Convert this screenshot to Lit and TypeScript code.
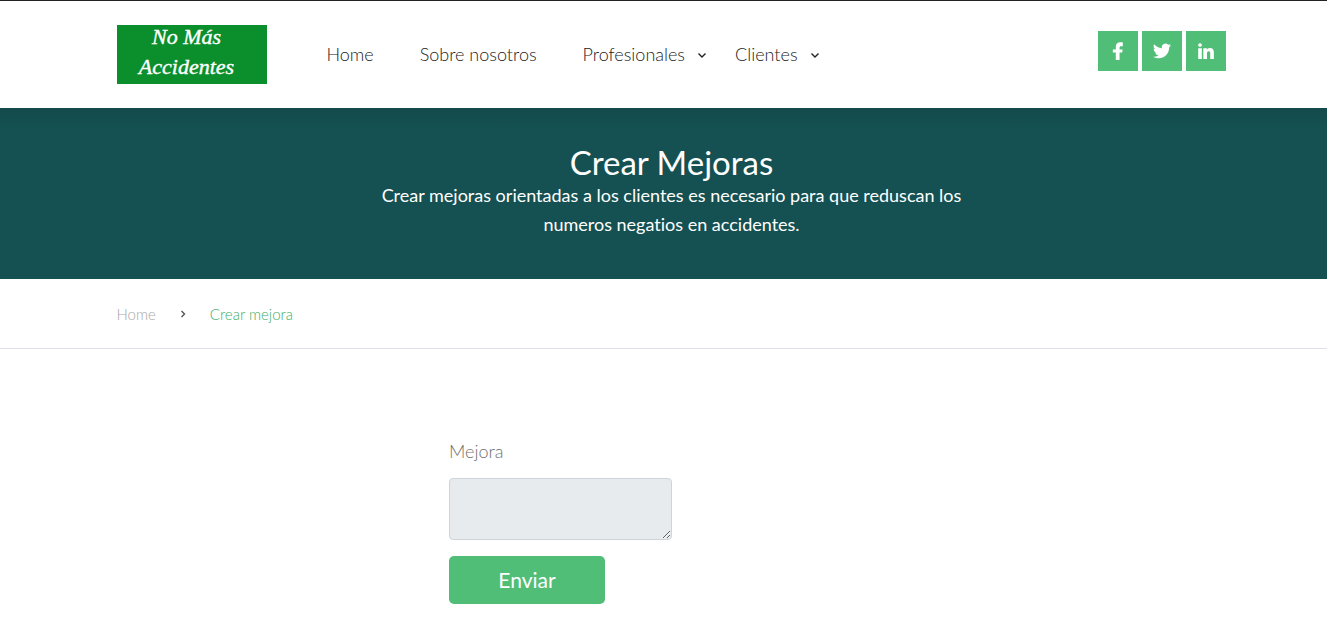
import { LitElement, html, css, svg } from "lit";
import { customElement } from "lit/decorators.js";

const chevronDown = html`<svg class="chevron" viewBox="0 0 10 10" aria-hidden="true"><path d="M1.5 3.5 5 7 8.5 3.5" /></svg>`;
const chevronRight = html`<svg class="chevron crumb-sep" viewBox="0 0 10 10" aria-hidden="true"><path d="M3.5 2 6.5 5 3.5 8" /></svg>`;

const socials = [
  {
    name: "Facebook",
    box: "0 0 320 512",
    shape: svg`<path d="M279 300l14-88h-89v-46c0-25 12-42 52-42h41V14s-37-7-72-7c-83 0-128 44-128 125v80H13v88h84v212h107V300z" />`,
  },
  {
    name: "Twitter",
    box: "0 0 24 24",
    shape: svg`<path d="M23.95 4.57a10 10 0 0 1-2.82.77 4.96 4.96 0 0 0 2.16-2.72c-.95.55-2 .95-3.13 1.18a4.92 4.92 0 0 0-8.38 4.48C7.69 8.1 4.07 6.13 1.64 3.16a4.9 4.9 0 0 0 1.52 6.57 4.9 4.9 0 0 1-2.23-.61v.06a4.92 4.92 0 0 0 3.95 4.83 5 5 0 0 1-2.21.08 4.94 4.94 0 0 0 4.6 3.42A9.87 9.87 0 0 1 0 19.54a13.99 13.99 0 0 0 7.55 2.21c9.05 0 14-7.5 14-13.98 0-.21 0-.42-.02-.63a9.94 9.94 0 0 0 2.46-2.55z" />`,
  },
  {
    name: "LinkedIn",
    box: "0 0 448 512",
    shape: svg`<path d="M105 480H2V176h103zM54 140C24 140 0 115 0 86a54 54 0 0 1 108 0c0 29-24 54-54 54zm394 340H345V334c0-34-1-74-43-74-44 0-51 38-51 72v148H148V176h99v41h1c13-24 43-48 88-48 94 0 112 62 112 142z" />`,
  },
];

@customElement("app-root")
export class AppRoot extends LitElement {
  static styles = css`
    :host {
      display: block;
      min-height: 100vh;
      background: #fff;
      color: #707070;
      font: 300 18px/29px Lato, "Open Sans", sans-serif;
      font-variant-ligatures: none;
    }
    *, *::before, *::after { box-sizing: border-box; }
    a { color: inherit; text-decoration: none; }
    .page { padding-left: 16px; }
    .container { max-width: 1110px; margin: 0 auto; }
    header {
      border-top: 1px solid #222;
      background: #fff;
    }
    .bar {
      display: flex;
      align-items: center;
      padding: 24px 1px 24px 0;
    }
    .logo {
      display: flex;
      flex-direction: column;
      align-items: center;
      gap: 6px;
      width: 150px;
      height: 59px;
      padding-right: 10px;
      background: #0a8f2c;
      color: #fff;
      font: italic 400 22px/24px "Liberation Serif", serif;
      -webkit-text-stroke: 0.4px #fff;
    }
    nav { display: flex; gap: 46px; margin-left: 60px; color: #222; }
    nav a { display: flex; align-items: center; gap: 12px; }
    .menus { display: flex; gap: 28px; }
    .chevron { width: 10px; height: 10px; fill: none; stroke: #222; stroke-width: 1.4; }
    .social { display: flex; gap: 4px; margin: 0 0 7px auto; }
    .social a {
      width: 40px;
      height: 40px;
      display: grid;
      place-items: center;
      background: #51be78;
    }
    .social svg { height: 18px; width: 18px; fill: #fff; }
    .hero {
      background: linear-gradient(#144a4b, #155152 20px);
      color: #fff;
      text-align: center;
      padding-top: 36px;
      padding-bottom: 40px;
      font-weight: 400;
    }
    h1 { font-size: 33px; line-height: 37px; font-weight: 400; margin: 0; }
    .hero p { margin: 0 auto; max-width: 620px; }
    .crumbs { border-bottom: 1px solid #dee2e6; font-size: 15px; line-height: 24px; }
    .crumbs .container { display: flex; align-items: center; padding: 23px 0 22px; }
    .crumbs a { color: #a8a8a8; }
    .chevron.crumb-sep { margin: 0 22px; stroke: #555; }
    .current { color: #3fae67; }
    form {
      display: flex;
      flex-direction: column;
      align-items: flex-start;
      width: 445px;
      max-width: 100%;
      margin: 0 auto;
      padding: 88px 0 36px;
    }
    label { margin-bottom: 12px; }
    textarea {
      width: 50%;
      height: 62px;
      margin: 0 0 16px;
      background: #e8ebee;
      border: 1px solid #ced4da;
      border-radius: 4px;
      font: inherit;
      padding: 6px 12px;
    }
    button {
      width: 156px;
      height: 48px;
      border: 0;
      border-radius: 5px;
      background: #51be78;
      color: #fff;
      font: 400 21px/30px Lato, "Open Sans", sans-serif;
      padding: 0;
    }
  `;

  render() {
    return html`
      <header class="page">
        <div class="container bar">
          <a class="logo" href="#"><span>No Más</span><span>Accidentes</span></a>
          <nav>
            <a href="#">Home</a>
            <a href="#">Sobre nosotros</a>
            <div class="menus">
              <a href="#">Profesionales ${chevronDown}</a>
              <a href="#">Clientes ${chevronDown}</a>
            </div>
          </nav>
          <div class="social">
            ${socials.map((s) => html`<a href="#" aria-label=${s.name}><svg viewBox=${s.box}>${s.shape}</svg></a>`)}
          </div>
        </div>
      </header>
      <section class="hero page">
        <h1>Crear Mejoras</h1>
        <p>Crear mejoras orientadas a los clientes es necesario para que reduscan los numeros negatios en accidentes.</p>
      </section>
      <div class="crumbs page">
        <div class="container">
          <a href="#">Home</a>${chevronRight}<span class="current">Crear mejora</span>
        </div>
      </div>
      <main class="page">
        <form>
          <label for="mejora">Mejora</label>
          <textarea id="mejora"></textarea>
          <button type="button">Enviar</button>
        </form>
      </main>
    `;
  }
}
